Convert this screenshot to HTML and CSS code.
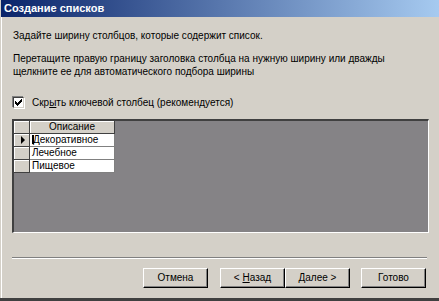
FILE: index.html
```html
<!DOCTYPE html>
<html lang="ru">

<head>
  <meta charset="UTF-8">
  <title>Создание списков</title>
  <link rel="stylesheet" href="styles.css">
</head>

<body>
  <div class="window">
    <div class="titlebar">Создание списков</div>
    <div class="client">
      <p class="lead">Задайте ширину столбцов, которые содержит список.</p>
      <p class="hint">Перетащите правую границу заголовка столбца на нужную ширину или дважды<br>щелкните ее для автоматического подбора ширины</p>
      <label class="check">
        <span class="check-box">
          <svg width="9" height="9" viewBox="0 0 9 9">
            <path d="M1.5 3.5 L3.5 5.5 L7.5 1.5 M1.5 4.5 L3.5 6.5 L7.5 2.5 M1.5 5.5 L3.5 7.5 L7.5 3.5" stroke="#000" stroke-width="1" fill="none" shape-rendering="crispEdges" />
          </svg>
        </span>
        <span>Скр<u>ы</u>ть ключевой столбец (рекомендуется)</span>
      </label>

      <div class="grid">
        <table>
          <tr>
            <th class="selector"></th>
            <th class="col">Описание</th>
          </tr>
          <tr>
            <td class="selector"><span class="arrow"></span></td>
            <td class="cell"><span class="caret"></span>Декоративное</td>
          </tr>
          <tr>
            <td class="selector"></td>
            <td class="cell">Лечебное</td>
          </tr>
          <tr>
            <td class="selector"></td>
            <td class="cell">Пищевое</td>
          </tr>
        </table>
      </div>

      <div class="separator"></div>

      <div class="buttons">
        <div class="button cancel">Отмена</div>
        <div class="button">&lt; <u>Н</u>азад</div>
        <div class="button"><u>Д</u>алее &gt;</div>
        <div class="button finish">Готово</div>
      </div>
    </div>
  </div>
</body>

</html>
```

FILE: styles.css
```css
body {
  margin: 0;
  background-color: #d4d0c8;
  font-family: "Liberation Sans", Arial, sans-serif;
  font-size: 10px;
  color: #000;
}

.window {
  width: 439px;
  height: 301px;
  box-sizing: border-box;
  border-bottom: 3px solid #404040;
  display: flex;
  flex-direction: column;
  overflow: hidden;
}

.titlebar {
  height: 17px;
  margin-left: 1px;
  padding-left: 3px;
  line-height: 17px;
  color: #fff;
  font-weight: bold;
  font-size: 11px;
  background: linear-gradient(to right, #0a246a, #a6caf0);
}

.client {
  flex: 1;
  margin-left: 1px;
  border-left: 1px solid #fff;
  padding: 12px 10px 0 10px;
}

p {
  margin: 0 0 0 1px;
  line-height: 13px;
}

.hint {
  margin-top: 10px;
}

.check {
  display: flex;
  align-items: center;
  gap: 8px;
  height: 13px;
  margin: 18px 0 0 1px;
}

.check-box {
  width: 9px;
  height: 9px;
  background-color: #fff;
  border-top: 1px solid #404040;
  border-left: 1px solid #404040;
  border-right: 1px solid #d4d0c8;
  border-bottom: 1px solid #d4d0c8;
  box-shadow: -1px -1px 0 #808080, 1px 1px 0 #fff;
  display: flex;
}

.grid {
  height: 114px;
  margin-top: 10px;
  box-sizing: border-box;
  background-color: #858386;
  border-top: 2px solid #404040;
  border-left: 2px solid #404040;
  border-right: 1px solid #fff;
  border-bottom: 1px solid #fff;
}

table {
  border-collapse: collapse;
}

th,
td {
  padding: 0;
  height: 12px;
  line-height: 12px;
  border-right: 1px solid #404040;
  border-bottom: 1px solid #404040;
  font-weight: normal;
}

.selector {
  width: 15px;
  background-color: #d4d0c8;
  box-shadow: inset 1px 1px 0 #fff;
  text-align: center;
}

.col {
  width: 84px;
  background-color: #d4d0c8;
  box-shadow: inset 1px 1px 0 #fff;
  text-align: center;
}

.cell {
  background-color: #fff;
  padding-left: 2px;
  border-color: #808080;
}

.arrow {
  display: inline-block;
  border-left: 4px solid #000;
  border-top: 4px solid transparent;
  border-bottom: 4px solid transparent;
  vertical-align: middle;
  margin-left: 2px;
}

.caret {
  display: inline-block;
  width: 2px;
  height: 9px;
  background-color: #000;
  vertical-align: -1px;
  margin-right: -1px;
}

.separator {
  margin: 24px 2px 0 0;
  border-top: 1px solid #808080;
  border-bottom: 1px solid #fff;
}

.buttons {
  display: flex;
  justify-content: flex-end;
  margin: 9px 3px 0 0;
}

.button {
  width: 65px;
  height: 20px;
  box-sizing: border-box;
  border-top: 1px solid #fff;
  border-left: 1px solid #fff;
  border-right: 1px solid #000;
  border-bottom: 1px solid #000;
  box-shadow: inset -1px -1px 0 #808080;
  line-height: 18px;
  text-align: center;
}

.cancel {
  margin-right: 12px;
}

.finish {
  margin-left: 11px;
}
```
